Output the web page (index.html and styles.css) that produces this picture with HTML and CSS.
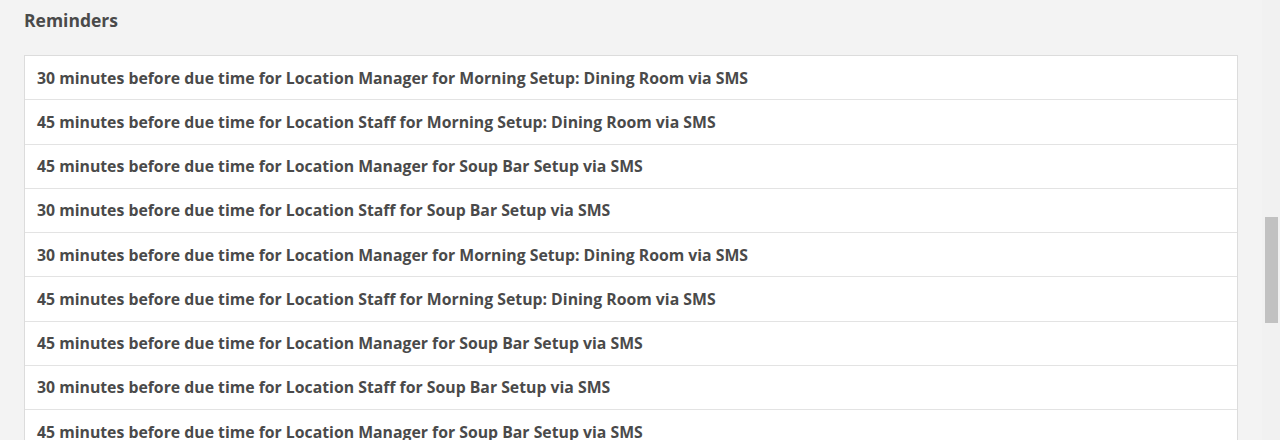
FILE: index.html
```html
<!DOCTYPE html>
<html lang="en">
<head>
<meta charset="utf-8">
<title>Reminders</title>
<link rel="stylesheet" href="styles.css">
</head>
<body>
<div class="page">
  <h2 class="title">Reminders</h2>
  <ul class="list">
    <li class="row">30 minutes before due time for Location Manager for Morning Setup: Dining Room via SMS</li>
    <li class="row">45 minutes before due time for Location Staff for Morning Setup: Dining Room via SMS</li>
    <li class="row">45 minutes before due time for Location Manager for Soup Bar Setup via SMS</li>
    <li class="row">30 minutes before due time for Location Staff for Soup Bar Setup via SMS</li>
    <li class="row">30 minutes before due time for Location Manager for Morning Setup: Dining Room via SMS</li>
    <li class="row">45 minutes before due time for Location Staff for Morning Setup: Dining Room via SMS</li>
    <li class="row">45 minutes before due time for Location Manager for Soup Bar Setup via SMS</li>
    <li class="row">30 minutes before due time for Location Staff for Soup Bar Setup via SMS</li>
    <li class="row">45 minutes before due time for Location Manager for Soup Bar Setup via SMS</li>
  </ul>
</div>
<div class="scrollbar"><div class="thumb"></div></div>
</body>
</html>
```
FILE: styles.css
```css
html, body {
  margin: 0;
  padding: 0;
  height: 100%;
  overflow: hidden;
  background: #f3f3f3;
}
body {
  font-family: "Open Sans", "Noto Sans", sans-serif;
  color: #4a4a4a;
}
.page {
  padding: 0 42px 0 24px;
}
.title {
  margin: 0;
  padding-top: 8px;
  height: 55px;
  box-sizing: border-box;
  font-size: 17.5px;
  font-weight: 700;
  line-height: 24px;
  color: #4a4a4a;
}
.list {
  list-style: none;
  margin: 0;
  padding: 0;
  background: #fff;
  border: 1px solid #dcdcdc;
}
.row {
  height: 43.25px;
  box-sizing: content-box;
  padding: 0 12px;
  display: flex;
  align-items: center;
  font-size: 15.8px;
  font-weight: 700;
  border-bottom: 1px solid #e3e3e3;
  white-space: nowrap;
}
.scrollbar {
  position: fixed;
  top: 0;
  right: 0;
  width: 18px;
  height: 100%;
  background: #f1f1f1;
}
.thumb {
  position: absolute;
  left: 3px;
  width: 13px;
  top: 217px;
  height: 106px;
  background: #c1c1c1;
}
```
